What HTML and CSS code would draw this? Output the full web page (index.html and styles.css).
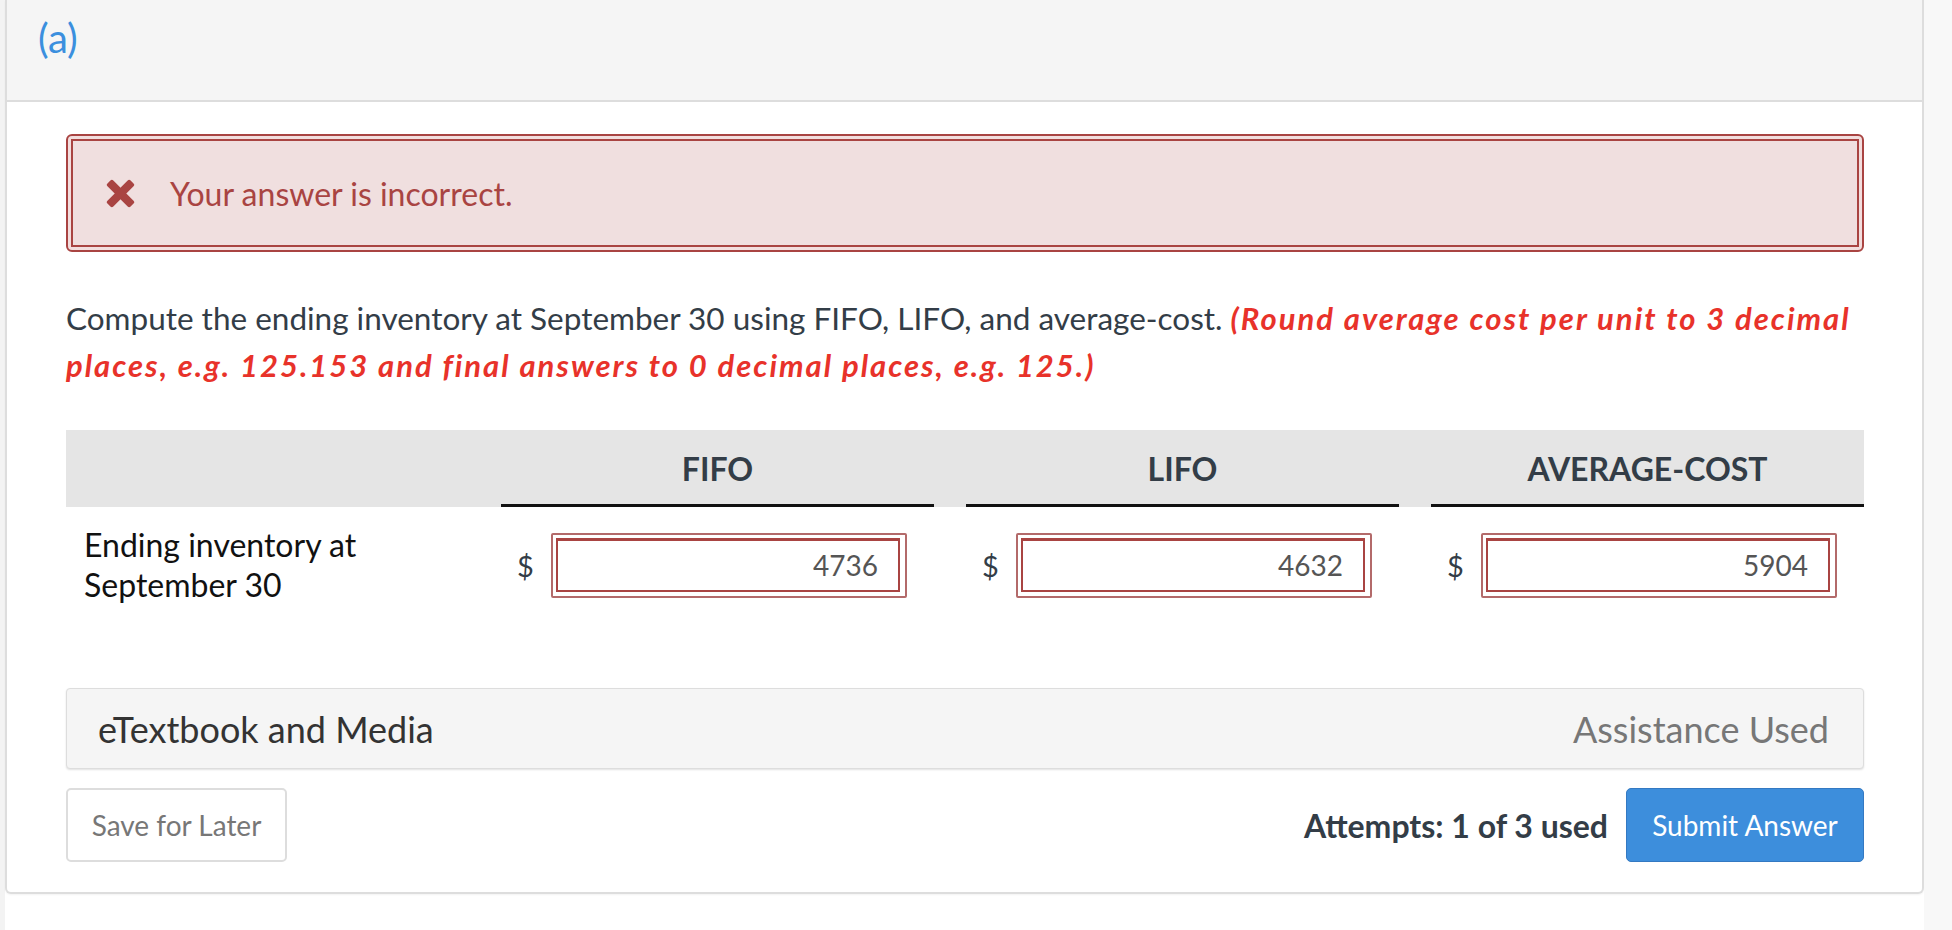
FILE: index.html
```html
<!DOCTYPE html>
<html lang="en">
<head>
<meta charset="utf-8">
<title>Question (a)</title>
<link rel="stylesheet" href="styles.css">
</head>
<body>
<div class="page">
  <div class="gutter-left"></div>
  <div class="card">
    <div class="card-header"><span class="part-label">(a)</span></div>
    <div class="card-body">
      <div class="alert">
        <div class="alert-inner">
          <svg class="alert-icon" viewBox="0 0 28 28" width="29" height="29" aria-hidden="true">
            <rect x="-1.8" y="10" width="31.6" height="8" rx="2" transform="rotate(45 14 14)"/>
            <rect x="-1.8" y="10" width="31.6" height="8" rx="2" transform="rotate(-45 14 14)"/>
          </svg>
          <span class="alert-text">Your answer is incorrect.</span>
        </div>
      </div>

      <p class="question">Compute the ending inventory at September 30 using FIFO, LIFO, and average-cost. <strong class="hint">(Round average cost per unit to 3 decimal places, e.g. 125.153 and final answers to 0 decimal places, e.g. 125.)</strong></p>

      <div class="grid">
        <div class="grid-head">
          <div class="head-cell head-blank"></div>
          <div class="head-cell">FIFO</div>
          <div class="head-cell">LIFO</div>
          <div class="head-cell">AVERAGE-COST</div>
        </div>
        <div class="grid-row">
          <div class="row-label">Ending inventory at<br>September 30</div>
          <div class="entry"><span class="currency">$</span><div class="field"><input class="field-input" type="text" value="4736" readonly></div></div>
          <div class="entry"><span class="currency">$</span><div class="field"><input class="field-input" type="text" value="4632" readonly></div></div>
          <div class="entry"><span class="currency">$</span><div class="field"><input class="field-input" type="text" value="5904" readonly></div></div>
        </div>
      </div>

      <div class="media-bar">
        <span class="media-title">eTextbook and Media</span>
        <span class="media-status">Assistance Used</span>
      </div>

      <div class="actions">
        <button class="btn btn-save" type="button">Save for Later</button>
        <div class="actions-right">
          <span class="attempts">Attempts: 1 of 3 used</span>
          <button class="btn btn-submit" type="button">Submit Answer</button>
        </div>
      </div>
    </div>
  </div>
  <div class="gutter-right"></div>
</div>
</body>
</html>
```

FILE: styles.css
```css
* { box-sizing: border-box; }

html, body {
  margin: 0;
  padding: 0;
  background: #ffffff;
}

body {
  font-family: Lato, "Open Sans", "Liberation Sans", sans-serif;
  color: #333d47;
}

.page {
  display: flex;
  align-items: flex-start;
  width: 1952px;
  height: 930px;
  overflow: hidden;
}

.gutter-left {
  width: 5px;
  align-self: stretch;
  background: #f3f3f3;
}

.gutter-right {
  flex: 1;
  align-self: stretch;
  background: #f8f8f8;
}

.card {
  width: 1919px;
  border: 2px solid #dddddd;
  border-top: none;
  border-radius: 0 0 6px 6px;
  background: #ffffff;
  box-shadow: 0 1px 2px rgba(0,0,0,0.05);
}

.card-header {
  height: 102px;
  background: #f5f5f5;
  border-bottom: 2px solid #dddddd;
  padding: 14px 0 0 31px;
}

.part-label {
  font-size: 40px;
  line-height: 48px;
  font-weight: 400;
  color: #3b8fde;
}

.card-body {
  padding: 32px 58px 30px 59px;
}

/* alert */
.alert {
  border: 2px solid #a94442;
  border-radius: 6px;
  padding: 3px;
  background: #f2dede;
}

.alert-inner {
  display: flex;
  align-items: center;
  height: 108px;
  border: 2px solid #a94442;
  background: #f0dfdf;
  padding-left: 33px;
  gap: 35px;
}

.alert-icon {
  fill: #a94442;
  flex: none;
}

.alert-text {
  font-size: 32px;
  color: #a94442;
}

/* question */
.question {
  margin: 43px 0 0;
  font-size: 31.5px;
  line-height: 47px;
  color: #333d47;
}

.hint {
  font-size: 31px;
  font-weight: 700;
  font-style: italic;
  letter-spacing: 2px;
  color: #e8322a;
}

/* grid */
.grid {
  margin-top: 41px;
}

.grid-head,
.grid-row {
  display: grid;
  grid-template-columns: 403px repeat(3, 1fr);
  column-gap: 32px;
}

.grid-head {
  background: #e5e5e5;
  height: 77px;
}

.head-cell {
  display: flex;
  align-items: center;
  justify-content: center;
  font-size: 32px;
  font-weight: 700;
  color: #333d47;
  border-bottom: 3px solid #111111;
  padding-top: 3px;
}

.head-blank {
  border-bottom: none;
}

.grid-row {
  padding-top: 18px;
  align-items: center;
}

.row-label {
  padding-left: 18px;
  font-size: 32px;
  line-height: 40px;
  color: #111111;
}

.entry {
  display: flex;
  align-items: center;
  padding: 0 27px 0 16px;
  gap: 17px;
}

.currency {
  font-size: 29px;
  color: #333d47;
}

.field {
  flex: 1;
  height: 65px;
  border: 2px solid #b36a6a;
  border-radius: 2px;
  padding: 3px 5px 4px 3px;
  background: #ffffff;
}

.field-input {
  display: block;
  width: 100%;
  height: 100%;
  border: 2px solid #a94442;
  border-top: 3px solid #a94442;
  background: #ffffff;
  font-family: Lato, "Open Sans", "Liberation Sans", sans-serif;
  font-size: 28px;
  color: #555555;
  text-align: right;
  padding: 0 20px 0 10px;
  outline: none;
  margin: 0;
}

/* media bar */
.media-bar {
  margin-top: 83px;
  height: 81px;
  display: flex;
  align-items: center;
  justify-content: space-between;
  padding: 0 34px 0 31px;
  background: #f5f5f5;
  border: 1px solid #dddddd;
  border-radius: 4px;
  box-shadow: 0 1px 2px rgba(0,0,0,0.12);
}

.media-title {
  font-size: 36px;
  color: #333333;
}

.media-status {
  font-size: 36px;
  color: #777777;
}

/* actions */
.actions {
  margin-top: 19px;
  display: flex;
  justify-content: space-between;
  align-items: center;
}

.actions-right {
  display: flex;
  align-items: center;
  gap: 18px;
}

.btn {
  height: 74px;
  font-family: Lato, "Open Sans", "Liberation Sans", sans-serif;
  font-size: 28px;
  border-radius: 5px;
  cursor: pointer;
  margin: 0;
}

.btn-save {
  width: 221px;
  background: #ffffff;
  border: 2px solid #dddddd;
  color: #777777;
}

.btn-submit {
  width: 238px;
  background: #3d8edc;
  border: 1px solid #3479c2;
  color: #ffffff;
}

.attempts {
  font-size: 32px;
  font-weight: 700;
  color: #333d47;
}
```
